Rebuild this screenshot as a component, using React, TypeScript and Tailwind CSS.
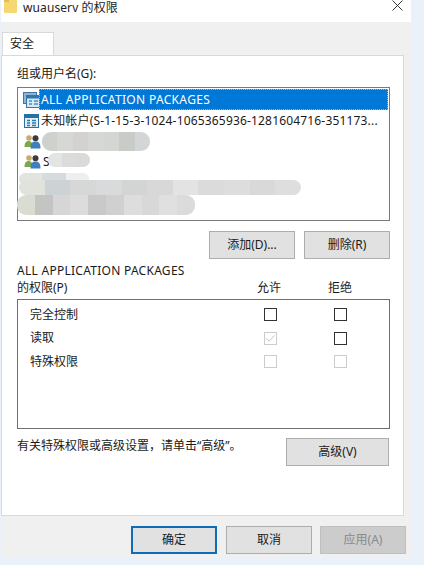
import React from "react";

const font = { fontFamily: '"Noto Sans","Noto Sans CJK SC",sans-serif' };

function Btn({ label, cls, text = "text-[#1a1a1a]" }: { label: string; cls: string; text?: string }) {
  return (
    <div className={`flex items-center justify-center h-[28px] text-[12px] ${text} ${cls}`}>{label}</div>
  );
}

function Box({ state }: { state: "on" | "dis" | "chk" }) {
  const border = state === "on" ? "border-[#333333]" : "border-[#cccccc]";
  return (
    <div className={`w-[13px] h-[13px] border ${border} bg-white flex items-center justify-center`}>
      {state === "chk" && (
        <svg width="11" height="11" viewBox="0 0 11 11" fill="none">
          <path d="M1.5 5.5 L4.2 8.2 L9.5 2.5" stroke="#c4c4c4" strokeWidth="1" />
        </svg>
      )}
    </div>
  );
}

function Perm({ name, a, d }: { name: string; a: "on" | "dis" | "chk"; d: "on" | "dis" | "chk" }) {
  return (
    <div className="flex items-center h-[23.5px] pl-[12px] text-[12px] text-[#1a1a1a]">
      <div className="w-[234px] leading-none">{name}</div>
      <Box state={a} />
      <div className="w-[57px]" />
      <Box state={d} />
    </div>
  );
}

function UsersIcon() {
  return (
    <svg width="17" height="15" viewBox="0 0 17 15" className="shrink-0">
      <circle cx="5" cy="4" r="2.8" fill="#c9ad6c" />
      <path d="M0.5 13 C0.5 8 2.5 7 5 7 C7.5 7 8.5 9 8.5 13 Z" fill="#7fa64b" />
      <circle cx="11.5" cy="4.2" r="3" fill="#3d3a38" />
      <path d="M6.5 14.5 C6.5 9 8.5 7.5 11.5 7.5 C14.5 7.5 16.5 9 16.5 14.5 Z" fill="#3f7fbf" />
    </svg>
  );
}

function PackagesIcon() {
  return (
    <svg width="18" height="16" viewBox="0 0 18 16" className="shrink-0">
      <rect x="0.5" y="0.5" width="13" height="11" fill="#8fb4d6" stroke="#3f78a8" />
      <rect x="3.5" y="3.5" width="14" height="12" fill="#d7e8f5" stroke="#2f77ad" />
      <rect x="3.5" y="3.5" width="14" height="3" fill="#2f77ad" />
      <path d="M6 9h3M11 9h4M6 12h3M11 12h4" stroke="#4a90c4" strokeWidth="1.4" />
    </svg>
  );
}

function UnknownIcon() {
  return (
    <svg width="15" height="14" viewBox="0 0 15 14" className="shrink-0">
      <rect x="0.5" y="0.5" width="14" height="13" fill="#e3eff8" stroke="#2a6f9f" />
      <rect x="1" y="1" width="13" height="3" fill="#2a6f9f" />
      <path d="M3 6.5h3M8 6.5h4M3 9h3M8 9h4M3 11.5h3M8 11.5h4" stroke="#2a7bb0" strokeWidth="1.5" />
    </svg>
  );
}

function Blur({ cls, cells }: { cls: string; cells: string[] }) {
  return (
    <div className={`absolute flex overflow-hidden rounded-[9px] blur-[0.6px] ${cls}`}>
      {cells.map((c, i) => (
        <div key={i} className="flex-1" style={{ backgroundColor: c }} />
      ))}
    </div>
  );
}

export default function App() {
  return (
    <div className="relative w-[424px] h-[565px] overflow-hidden bg-[#ebf1f9]" style={font}>
      <div className="ml-[1px] w-[410px] h-[558px] flex flex-col bg-[#f0f0f0]">
        {/* title bar */}
        <div className="h-[22px] bg-white flex items-start shrink-0">
          <svg width="14" height="13" viewBox="0 0 14 13" className="ml-[3px] shrink-0">
            <path d="M0 0 H13 V12 Q13 13 12 13 H1 Q0 13 0 12 Z" fill="#f6d873" />
            <path d="M0 0 H5 V2 H0 Z" fill="#e6bd52" />
          </svg>
          <div className="ml-[5px] mt-[-1px] text-[12px] leading-[18px] tracking-[0.1px] text-[#222222]">wuauserv 的权限</div>
          <svg width="13" height="13" viewBox="0 0 13 13" className="ml-auto mr-[7px] shrink-0" fill="none">
            <path d="M1.5 0.5 L11.5 10.5 M11.5 0.5 L1.5 10.5" stroke="#333333" strokeWidth="1" />
          </svg>
        </div>

        {/* tabs */}
        <div className="h-[33px] shrink-0 flex items-end pl-[1px] relative">
          <div className="relative top-[1px] w-[52px] h-[24px] bg-white border border-b-0 border-[#d9d9d9] text-[12px] leading-[22px] pl-[7px] text-[#1a1a1a]">
            安全
          </div>
        </div>

        {/* panel */}
        <div className="w-[403px] h-[461px] shrink-0 bg-white border border-[#d9d9d9] flex flex-col text-[#1a1a1a] relative">
          <div className="ml-[15px] mt-[9px] h-[18px] text-[12px] leading-[18px]">组或用户名(G):</div>
          {/* list */}
          <div className="relative ml-[15px] mt-[4px] w-[373px] h-[134px] border border-[#7a7a7a] pt-[1px] pr-[1px] text-[12px]">
            <div className="flex items-center h-[21px] pl-[5px]">
              <PackagesIcon />
              <span className="h-[21px] flex-1 bg-[#0078d7] text-white border border-dotted border-[#8bbce6] -ml-[2px] pl-[1px] flex items-center tracking-[0.33px]">
                ALL APPLICATION PACKAGES
              </span>
            </div>
            <div className="flex items-center h-[21px] pl-[6px] gap-[2px] whitespace-nowrap overflow-hidden">
              <UnknownIcon />
              <span className="tracking-[0.17px]">未知帐户(S-1-15-3-1024-1065365936-1281604716-351173...</span>
            </div>
            <div className="flex items-center h-[20px] pl-[6px]">
              <UsersIcon />
            </div>
            <div className="flex items-center h-[21px] pl-[6px] gap-[2px]">
              <UsersIcon />
              <span>S</span>
            </div>
            <Blur cls="left-[24px] top-[44px] w-[108px] h-[19px]" cells={["#cfd1cd", "#d5d8d5", "#d3d2d0", "#d6d8d6", "#d4d6d4", "#c9cbc6", "#d2d6d6"]} />
            <Blur cls="left-[30px] top-[65px] w-[42px] h-[14px]" cells={["#e4e5e3", "#dcdcdc", "#dadada"]} />
            <Blur cls="left-[1px] top-[85px] w-[70px] h-[12px]" cells={["#e2e5df", "#d5dcdf", "#eeeeee"]} />
            <Blur cls="left-[1px] top-[92px] w-[282px] h-[15px]" cells={["#e0e3dc", "#cdd2d4", "#d6d8d8", "#d9dadb", "#d3d4d4", "#d8d8d8", "#e3e3e3", "#dbdbdb", "#dddddd", "#d9d9d9", "#dedede"]} />
            <Blur cls="left-[-1px] top-[107px] w-[178px] h-[20px]" cells={["#d9ddd1", "#c4c4c4", "#d6d6d6", "#dcdcdc", "#c9c9c9", "#d0d0d0", "#dddddd", "#d8d8d8", "#e0e0e0", "#dbdbdb"]} />
          </div>

          {/* add / remove */}
          <div className="flex ml-[207px] mt-[10px] gap-[9px]">
            <Btn label="添加(D)..." cls="w-[86px] bg-[#e1e1e1] border border-[#adadad]" />
            <Btn label="删除(R)" cls="w-[86px] bg-[#e1e1e1] border border-[#adadad]" />
          </div>

          {/* permission heading */}
          <div className="ml-[15px] mt-[3px] h-[17px] text-[12px] leading-[17px] tracking-[0.27px]">ALL APPLICATION PACKAGES</div>
          <div className="flex ml-[15px] h-[17px] text-[12px] leading-[17px]">
            <div className="w-[240px]">的权限(P)</div>
            <div className="w-[71px]">允许</div>
            <div>拒绝</div>
          </div>

          {/* permission box */}
          <div className="ml-[15px] mt-[3px] w-[373px] h-[130px] border border-[#6f6f6f] pt-[3px]">
            <Perm name="完全控制" a="on" d="on" />
            <Perm name="读取" a="chk" d="on" />
            <Perm name="特殊权限" a="dis" d="dis" />
          </div>

          {/* advanced */}
          <div className="flex ml-[15px] mt-[9px] w-[372px] text-[12px]">
            <div className="flex-1 leading-[16px]">有关特殊权限或高级设置，请单击“高级”。</div>
            <Btn label="高级(V)" cls="w-[103px] bg-[#e1e1e1] border border-[#adadad]" />
          </div>
        </div>

        {/* footer */}
        <div className="flex pl-[130px] pt-[10px] gap-[9px] w-[424px]">
          <Btn label="确定" cls="w-[86px] bg-[#e1e1e1] border-2 border-[#0f6cb5]" />
          <Btn label="取消" cls="w-[86px] bg-[#e1e1e1] border border-[#adadad]" />
          <Btn label="应用(A)" text="text-[#8a8a8a]" cls="w-[86px] -ml-px bg-[#cccccc] border border-[#bfbfbf]" />
        </div>
      </div>
    </div>
  );
}
